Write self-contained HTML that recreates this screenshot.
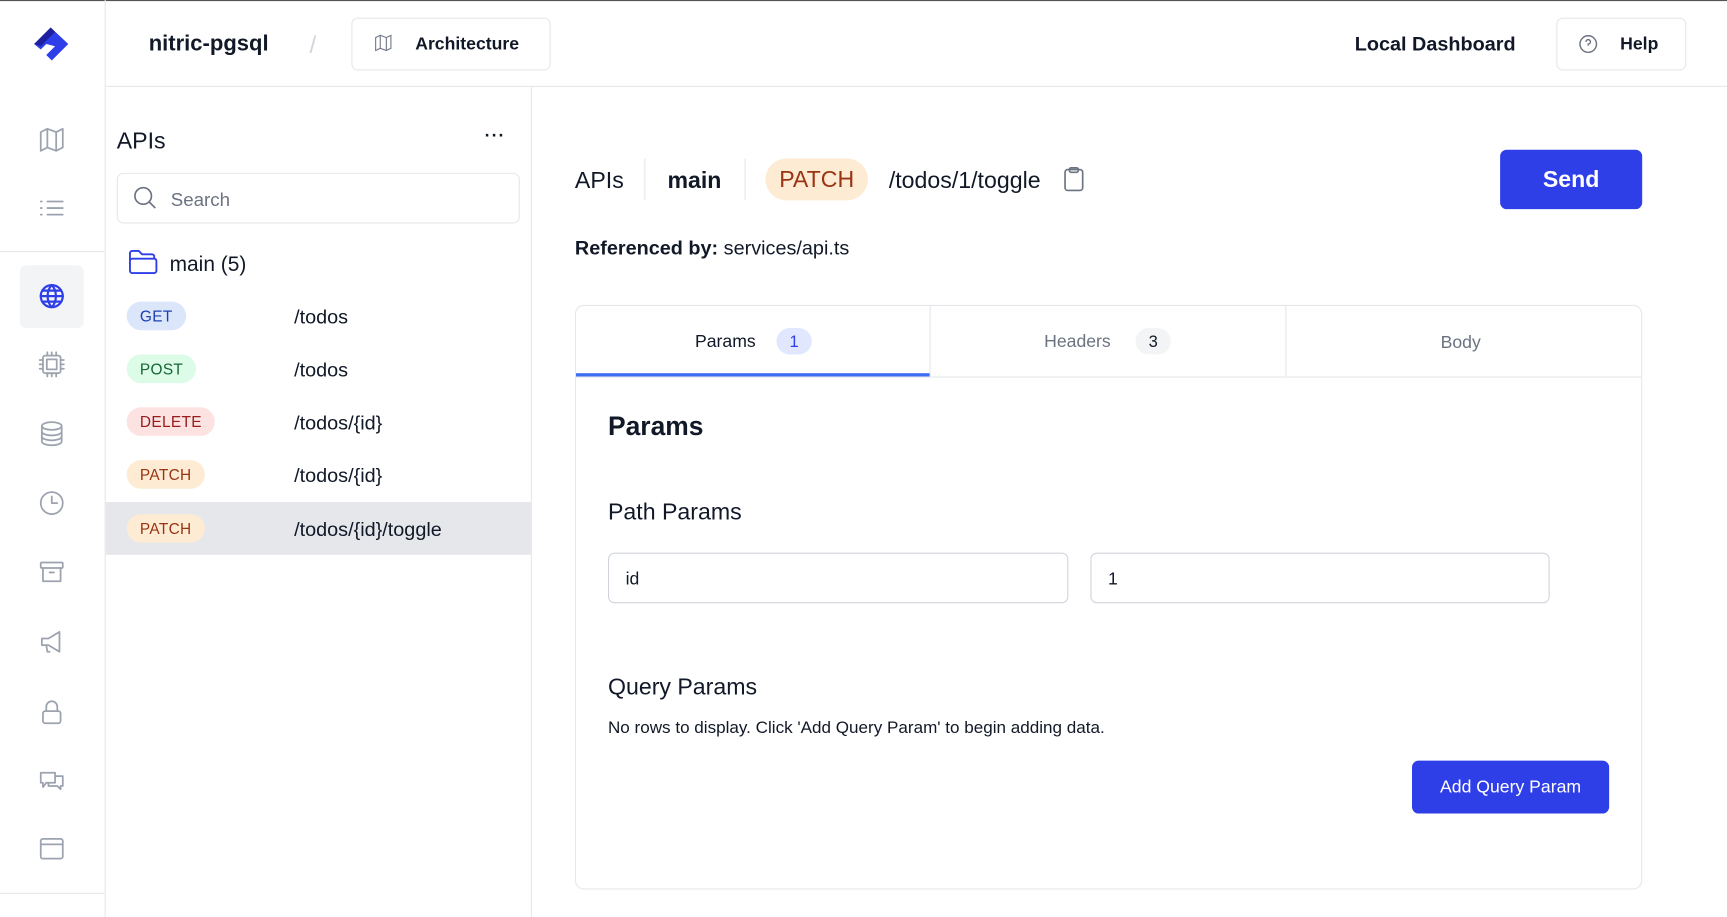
<!DOCTYPE html>
<html><head><meta charset="utf-8"><style>
html,body{margin:0;padding:0;width:1727px;height:917px;overflow:hidden;background:#fff}
#s{position:absolute;left:0;top:0;width:1568px;height:833px;transform:scale(1.10140,1.10084);transform-origin:0 0;font-family:"Liberation Sans",sans-serif;color:#111827;background:#fff}
.a{position:absolute}
.t{position:absolute;margin-top:2px}
.ic{position:absolute;left:34px;width:26px;height:26px;fill:none;stroke:#9ca3af;stroke-width:1.6;stroke-linecap:round;stroke-linejoin:round}
.badge{position:absolute;left:115px;height:26px;line-height:27px;border-radius:13px;padding:0 12px;font-size:14px;letter-spacing:.3px}
.row{position:absolute;left:96px;width:386px;height:48px}
.path{position:absolute;left:267px;font-size:18px;color:#111827;margin-top:2px}
.btn{position:absolute;border:1px solid #e5e7eb;border-radius:6px;background:#fff}
.inp{position:absolute;border:1px solid #d1d5db;border-radius:6px;height:46px;line-height:48px;padding-left:15px;font-size:16px;box-sizing:border-box}
</style></head><body><div id="s">
<div class="a" style="left:0;top:0;width:1568px;height:1px;background:#555"></div>
<div class="a" style="left:95px;top:0;width:1px;height:833px;background:#e5e7eb"></div>
<svg class="a" style="left:28px;top:20px" width="38" height="40" viewBox="0 0 38 40"><path d="M3 20 L18 5 L34 20 L19 35 L14 30 L22 22 L14 20 L9 25 Z" fill="#2e3ee8"/><path d="M3 20 L18 5 L22 9 L9 22 Z" fill="#1e1f9e"/></svg>
<div class="a" style="left:0;top:228px;width:95px;height:1px;background:#e5e7eb"></div>
<div class="a" style="left:18px;top:241px;width:58px;height:57px;background:#f3f4f6;border-radius:6px"></div>
<div class="a" style="left:0;top:811px;width:95px;height:1px;background:#e5e7eb"></div>
<svg class="ic" style="top:114px" viewBox="0 0 26 26"><path d="M3 6 L9 3 L17 6 L23 3 V20 L17 23 L9 20 L3 23 Z M9 3 V20 M17 6 V23"/></svg>
<svg class="ic" style="top:176px" viewBox="0 0 26 26"><path d="M9 7 H23 M9 13 H23 M9 19 H23 M3 7 H4 M3 13 H4 M3 19 H4"/></svg>
<svg class="ic" style="top:256px;stroke:#2e3ee8;stroke-width:2" viewBox="0 0 26 26"><circle cx="13" cy="13" r="10"/><path d="M3 13 H23 M13 3 C8 8 8 18 13 23 M13 3 C18 8 18 18 13 23 M5 8 H21 M5 18 H21"/></svg>
<svg class="ic" style="top:318px" viewBox="0 0 26 26"><rect x="5" y="5" width="16" height="16" rx="2"/><rect x="8.5" y="8.5" width="9" height="9"/><path d="M9 2 V5 M13 2 V5 M17 2 V5 M9 21 V24 M13 21 V24 M17 21 V24 M2 9 H5 M2 13 H5 M2 17 H5 M21 9 H24 M21 13 H24 M21 17 H24"/></svg>
<svg class="ic" style="top:381px" viewBox="0 0 26 26"><ellipse cx="13" cy="6" rx="9" ry="3.5"/><path d="M4 6 V20 C4 22 8 23.5 13 23.5 C18 23.5 22 22 22 20 V6 M4 11 C4 13 8 14.5 13 14.5 C18 14.5 22 13 22 11 M4 15.5 C4 17.5 8 19 13 19 C18 19 22 17.5 22 15.5"/></svg>
<svg class="ic" style="top:444px" viewBox="0 0 26 26"><circle cx="13" cy="13" r="10"/><path d="M13 7 V13 H18"/></svg>
<svg class="ic" style="top:507px" viewBox="0 0 26 26"><rect x="3" y="4" width="20" height="5" rx="1"/><path d="M5 9 V21 H21 V9 M11 13 H15"/></svg>
<svg class="ic" style="top:570px" viewBox="0 0 26 26"><path d="M4 10 H10 L20 4 V22 L10 16 H4 Z M8 16 L9 22 H11"/></svg>
<svg class="ic" style="top:634px" viewBox="0 0 26 26"><rect x="5" y="12" width="16" height="11" rx="2"/><path d="M8 12 V8 A5 5 0 0 1 18 8 V12"/></svg>
<svg class="ic" style="top:696px" viewBox="0 0 26 26"><path d="M3 6 H16 V15 H8 L5 19 V15 H3 Z M16 9 H23 V18 H21 V21 L18 18 H10 V15"/></svg>
<svg class="ic" style="top:758px" viewBox="0 0 26 26"><rect x="3" y="4" width="20" height="18" rx="2"/><path d="M3 9 H23"/></svg>
<div class="a" style="left:96px;top:78px;width:1472px;height:1px;background:#e5e7eb"></div>
<div class="t" style="left:135px;top:27px;font-size:20px;font-weight:bold">nitric-pgsql</div>
<div class="t" style="left:281px;top:26px;font-size:22px;color:#d1d5db">/</div>
<div class="btn" style="left:319px;top:16px;width:179px;height:46px"></div>
<svg class="a" style="left:339px;top:30px;width:18px;height:18px;fill:none;stroke:#6b7280;stroke-width:1.4" viewBox="0 0 26 26"><path d="M3 6 L9 3 L17 6 L23 3 V20 L17 23 L9 20 L3 23 Z M9 3 V20 M17 6 V23"/></svg>
<div class="t" style="left:377px;top:30px;font-size:16px;font-weight:bold">Architecture</div>
<div class="t" style="left:1230px;top:28px;font-size:18px;font-weight:bold">Local Dashboard</div>
<div class="btn" style="left:1413px;top:16px;width:116px;height:46px"></div>
<svg class="a" style="left:1433px;top:31px;fill:none;stroke:#6b7280;stroke-width:1.3" width="18" height="18" viewBox="0 0 18 18"><circle cx="9" cy="9" r="7.5"/><path d="M7 7 A2 2 0 1 1 9 9 V10.5 M9 12.8 V13"/></svg>
<div class="t" style="left:1471px;top:30px;font-size:16px;font-weight:bold">Help</div>
<div class="a" style="left:482px;top:79px;width:1px;height:754px;background:#e5e7eb"></div>
<div class="t" style="left:106px;top:115px;font-size:21px">APIs</div>
<div class="t" style="left:440px;top:113px;font-size:16px;font-weight:bold;letter-spacing:1px">···</div>
<div class="a" style="left:106px;top:157px;width:366px;height:46px;border:1px solid #e5e7eb;border-radius:6px;box-sizing:border-box"></div>
<svg class="a" style="left:120px;top:168px;fill:none;stroke:#6b7280;stroke-width:1.5" width="24" height="24" viewBox="0 0 24 24"><circle cx="10" cy="10" r="7.5"/><path d="M15.5 15.5 L21 21"/></svg>
<div class="t" style="left:155px;top:170px;font-size:17px;color:#6b7280">Search</div>
<svg class="a" style="left:116px;top:226px;fill:none;stroke:#2e3ee8;stroke-width:1.7" width="28" height="24" viewBox="0 0 28 24"><path d="M2 20 V4 A2 2 0 0 1 4 2 H10 L13 5 H22 A2 2 0 0 1 24 7 V9 M2 20 A2 2 0 0 0 4 22 H24 A2 2 0 0 0 26 20 V11 A2 2 0 0 0 24 9 H4 A2 2 0 0 0 2 11"/></svg>
<div class="t" style="left:154px;top:228px;font-size:19px">main (5)</div>
<div class="row" style="top:456px;background:#e5e7eb"></div>
<div class="badge" style="top:274px;background:#dbe6fb;color:#1e40af">GET</div>
<div class="path" style="top:276px">/todos</div>
<div class="badge" style="top:322px;background:#dcfce7;color:#166534">POST</div>
<div class="path" style="top:324px">/todos</div>
<div class="badge" style="top:370px;background:#fde2e2;color:#991b1b">DELETE</div>
<div class="path" style="top:372px">/todos/{id}</div>
<div class="badge" style="top:418px;background:#fdebd3;color:#9a3412">PATCH</div>
<div class="path" style="top:420px">/todos/{id}</div>
<div class="badge" style="top:467px;background:#fdebd3;color:#9a3412">PATCH</div>
<div class="path" style="top:469px">/todos/{id}/toggle</div>
<div class="t" style="left:522px;top:151px;font-size:21px">APIs</div>
<div class="a" style="left:585px;top:144px;width:1px;height:38px;background:#e5e7eb"></div>
<div class="t" style="left:606px;top:151px;font-size:21px;font-weight:bold">main</div>
<div class="a" style="left:676px;top:144px;width:1px;height:38px;background:#e5e7eb"></div>
<div class="a" style="left:695px;top:144px;width:93px;height:38px;line-height:40px;border-radius:19px;background:#fdebd3;color:#9a3412;font-size:21px;text-align:center">PATCH</div>
<div class="t" style="left:807px;top:151px;font-size:21px">/todos/1/toggle</div>
<svg class="a" style="left:965px;top:151px;fill:none;stroke:#6b7280;stroke-width:1.5" width="20" height="24" viewBox="0 0 20 24"><rect x="2" y="3" width="16" height="19" rx="2.5"/><rect x="6" y="1.5" width="8" height="4" rx="1.5"/></svg>
<div class="a" style="left:1362px;top:136px;width:129px;height:54px;line-height:56px;background:#2f3fe8;border-radius:6px;color:#fff;font-size:21px;font-weight:bold;text-align:center">Send</div>
<div class="t" style="left:522px;top:213px;font-size:18px"><b>Referenced by:</b> services/api.ts</div>
<div class="a" style="left:522px;top:277px;width:969px;height:531px;border:1px solid #e5e7eb;border-radius:8px;box-sizing:border-box"></div>
<div class="a" style="left:523px;top:342px;width:967px;height:1px;background:#e5e7eb"></div>
<div class="a" style="left:844px;top:278px;width:1px;height:64px;background:#e5e7eb"></div>
<div class="a" style="left:1167px;top:278px;width:1px;height:64px;background:#e5e7eb"></div>
<div class="a" style="left:523px;top:339px;width:321px;height:3px;background:#3b6ef0"></div>
<div class="t" style="left:631px;top:300px;font-size:16px">Params</div>
<div class="a" style="left:705px;top:298px;width:32px;height:24px;line-height:25px;border-radius:12px;background:#e0e7ff;color:#2e3ee8;font-size:15px;text-align:center">1</div>
<div class="t" style="left:948px;top:300px;font-size:16px;color:#6b7280">Headers</div>
<div class="a" style="left:1031px;top:298px;width:32px;height:24px;line-height:25px;border-radius:12px;background:#f3f4f6;color:#111827;font-size:15px;text-align:center">3</div>
<div class="t" style="left:1308px;top:301px;font-size:16px;color:#6b7280">Body</div>
<div class="t" style="left:552px;top:372px;font-size:24px;font-weight:bold">Params</div>
<div class="t" style="left:552px;top:452px;font-size:21px">Path Params</div>
<div class="inp" style="left:552px;top:502px;width:418px">id</div>
<div class="inp" style="left:990px;top:502px;width:417px">1</div>
<div class="t" style="left:552px;top:611px;font-size:21px">Query Params</div>
<div class="t" style="left:552px;top:651px;font-size:15.5px">No rows to display. Click 'Add Query Param' to begin adding data.</div>
<div class="a" style="left:1282px;top:691px;width:179px;height:48px;line-height:50px;background:#2f3fe8;border-radius:6px;color:#fff;font-size:16px;text-align:center">Add Query Param</div>
</div></body></html>
